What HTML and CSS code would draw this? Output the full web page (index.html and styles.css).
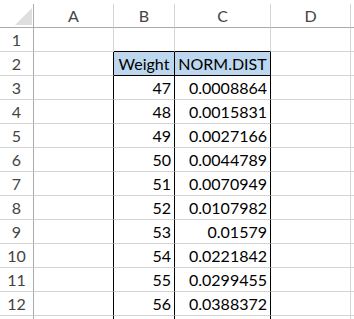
FILE: index.html
```html
<!DOCTYPE html>
<html lang="en">
<head>
<meta charset="UTF-8" />
<title>NORM.DIST</title>
<link rel="stylesheet" href="styles.css">
</head>
<body>
<div class="sheet">
  <!-- 列見出し -->
  <div class="cell hd corner"><span class="tri"></span></div>
  <div class="cell hd">A</div>
  <div class="cell hd">B</div>
  <div class="cell hd">C</div>
  <div class="cell hd">D</div>
  <div class="cell hd"></div>

  <div class="cell rh">1</div>
  <div class="cell"></div>
  <div class="cell bb"></div>
  <div class="cell bb"></div>
  <div class="cell"></div>
  <div class="cell"></div>

  <div class="cell rh">2</div>
  <div class="cell br"></div>
  <div class="cell title br bb">Weight</div>
  <div class="cell title br bb">NORM.DIST</div>
  <div class="cell"></div>
  <div class="cell"></div>

  <div class="cell rh">3</div>
  <div class="cell br"></div>
  <div class="cell num br">47</div>
  <div class="cell num br">0.0008864</div>
  <div class="cell"></div>
  <div class="cell"></div>

  <div class="cell rh">4</div>
  <div class="cell br"></div>
  <div class="cell num br">48</div>
  <div class="cell num br">0.0015831</div>
  <div class="cell"></div>
  <div class="cell"></div>

  <div class="cell rh">5</div>
  <div class="cell br"></div>
  <div class="cell num br">49</div>
  <div class="cell num br">0.0027166</div>
  <div class="cell"></div>
  <div class="cell"></div>

  <div class="cell rh">6</div>
  <div class="cell br"></div>
  <div class="cell num br">50</div>
  <div class="cell num br">0.0044789</div>
  <div class="cell"></div>
  <div class="cell"></div>

  <div class="cell rh">7</div>
  <div class="cell br"></div>
  <div class="cell num br">51</div>
  <div class="cell num br">0.0070949</div>
  <div class="cell"></div>
  <div class="cell"></div>

  <div class="cell rh">8</div>
  <div class="cell br"></div>
  <div class="cell num br">52</div>
  <div class="cell num br">0.0107982</div>
  <div class="cell"></div>
  <div class="cell"></div>

  <div class="cell rh">9</div>
  <div class="cell br"></div>
  <div class="cell num br">53</div>
  <div class="cell num br">0.01579</div>
  <div class="cell"></div>
  <div class="cell"></div>

  <div class="cell rh">10</div>
  <div class="cell br"></div>
  <div class="cell num br">54</div>
  <div class="cell num br">0.0221842</div>
  <div class="cell"></div>
  <div class="cell"></div>

  <div class="cell rh">11</div>
  <div class="cell br"></div>
  <div class="cell num br">55</div>
  <div class="cell num br">0.0299455</div>
  <div class="cell"></div>
  <div class="cell"></div>

  <div class="cell rh">12</div>
  <div class="cell br"></div>
  <div class="cell num br">56</div>
  <div class="cell num br">0.0388372</div>
  <div class="cell"></div>
  <div class="cell"></div>

  <!-- 13行目は画面下端で切れる -->
  <div class="cell rh"></div>
  <div class="cell br"></div>
  <div class="cell br"></div>
  <div class="cell br"></div>
  <div class="cell"></div>
  <div class="cell"></div>
</div>
</body>
</html>
```

FILE: styles.css
```css
*, *::before, *::after {
  box-sizing: border-box;
}
html, body {
  overflow: hidden;
}
body {
  margin: 0;
  padding-top: 4px;
  background: #fff;
  font-family: 'Lato', 'Liberation Sans', sans-serif;
  font-size: 16px;
  color: #000;
}

/* シート */
.sheet {
  display: grid;
  grid-template-columns: 34px 80px 61px 96px 80px 1fr;
  grid-auto-rows: 24px;
}
.cell {
  border-right: 1px solid #d4d4d4;
  border-bottom: 1px solid #d4d4d4;
  line-height: 23px;
  padding: 0 3px;
  white-space: nowrap;
  overflow: hidden;
}

/* 見出し */
.hd {
  text-align: center;
  color: #444;
  border-bottom-color: #ababab;
}
.rh {
  text-align: center;
  color: #444;
  padding: 0;
  border-right-color: #ababab;
}
.corner {
  display: flex;
  justify-content: flex-end;
  align-items: flex-end;
  padding: 0 1px 2px 0;
  border-right-color: #ababab;
}
.tri {
  width: 17px;
  height: 17px;
  background: #dfdfdf;
  clip-path: polygon(100% 0, 100% 100%, 0 100%);
}

/* 表 */
.title {
  background: #bdd7ee;
  text-align: center;
}
.num {
  text-align: right;
}
.br {
  border-right-color: #000;
}
.bb {
  border-bottom-color: #000;
}
```
